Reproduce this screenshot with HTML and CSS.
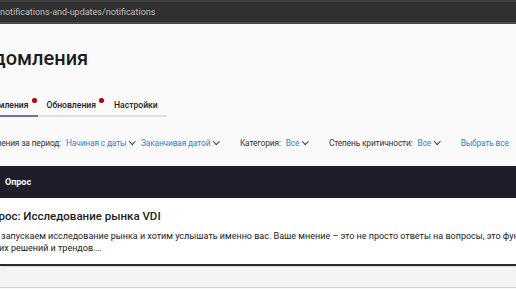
FILE: index.html
```html
<!DOCTYPE html>
<html lang="ru">
<head>
  <meta charset="UTF-8" />
  <meta name="viewport" content="width=device-width, initial-scale=1.0"/>
  <title>Уведомления</title>
  <link rel="stylesheet" href="styles.css">
</head>
<body>

  <div class="urlbar">
    <span class="url">notifications-and-updates/notifications</span>
  </div>

  <div class="page">
    <h1>Уведомления</h1>

    <div class="tabs">
      <div class="tab active">Уведомления<span class="dot"></span></div>
      <div class="tab">Обновления<span class="dot"></span></div>
      <div class="tab">Настройки</div>
    </div>

    <div class="filters">
      <span class="label">Уведомления за период:</span>
      <span class="select">Начиная с даты <i class="chev"></i></span>
      <span class="select">Заканчивая датой <i class="chev"></i></span>
      <span class="label gap">Категория:</span>
      <span class="select">Все <i class="chev"></i></span>
      <span class="label gap">Степень критичности:</span>
      <span class="select">Все <i class="chev"></i></span>
      <span class="select link">Выбрать все</span>
    </div>
  </div>

  <div class="card">
    <div class="card-head">Опрос</div>
    <div class="card-body">
      <div class="card-title">Опрос: Исследование рынка VDI</div>
      <p class="card-text">Мы запускаем исследование рынка и хотим услышать именно вас. Ваше мнение – это не просто ответы на вопросы, это фундамент для своих решений и трендов.…</p>
    </div>
  </div>

  <div class="next"></div>

</body>
</html>
```

FILE: styles.css
```css
body {
  margin: 0;
  background: #fafafa;
  font-family: Roboto, "Noto Sans", sans-serif;
  color: #1d1d1d;
  overflow: hidden;
}
.urlbar {
  height: 20px;
  background: #303030;
  border-top: 2px solid #3f3f3f;
  border-bottom: 2px solid #4a4a4a;
  display: flex;
  align-items: center;
}
.url {
  color: #bdbdbd;
  font-size: 9px;
  white-space: nowrap;
}
.page {
  width: 900px;
}
h1 {
  margin: 0 0 0 -41px;
  padding-top: 21px;
  font-size: 20px;
  font-weight: 500;
  line-height: 26px;
}
.tabs {
  display: inline-flex;
  gap: 9px;
  margin-top: 27px;
  margin-left: -27px;
  border-bottom: 2px solid #e0e0e6;
}
.tab {
  position: relative;
  font-size: 8.6px;
  font-weight: 500;
  line-height: 10px;
  padding: 2px 9px 5px 0;
  margin-bottom: -2px;
  border-bottom: 2px solid transparent;
}
.tab.active {
  border-bottom-color: #6f7399;
}
.dot {
  position: absolute;
  right: 1px;
  top: 0;
  width: 4.5px;
  height: 4.5px;
  border-radius: 50%;
  background: #b00012;
}
.filters {
  display: flex;
  align-items: center;
  margin-top: 21px;
  margin-left: -33px;
  font-size: 8.4px;
  line-height: 10px;
  letter-spacing: -0.15px;
  white-space: nowrap;
}
.label {
  color: #333;
  margin-right: 5px;
}
.label.gap {
  margin-left: 15px;
}
.select {
  color: #2d86d6;
  margin-right: 6px;
  display: inline-flex;
  align-items: center;
}
.select.link {
  margin-left: 15px;
}
.chev {
  display: inline-block;
  width: 3.5px;
  height: 3.5px;
  border-right: 1.2px solid #333;
  border-bottom: 1.2px solid #333;
  transform: rotate(45deg);
  margin: -3px 0 0 4px;
}
.card {
  margin-top: 18px;
  background: #fff;
  border-bottom: 2px solid #2c2c30;
  box-shadow: 0 1px 2px rgba(0, 0, 0, 0.2);
}
.card-head {
  height: 32px;
  background: #1d1e2a;
  color: #fff;
  font-size: 9px;
  font-weight: 700;
  display: flex;
  align-items: center;
  padding-left: 5px;
}
.card-body {
  margin-left: -16px;
  width: 598px;
  padding: 11px 0 10px;
}
.card-title {
  font-size: 11.5px;
  font-weight: 500;
  line-height: 15px;
}
.card-text {
  margin: 6px 0 0;
  font-size: 9px;
  line-height: 12px;
  color: #222;
}
.next {
  height: 20px;
  margin-top: 1px;
  background: #f4f4f4;
  border-bottom: 1px solid #d2d2d2;
}
```
